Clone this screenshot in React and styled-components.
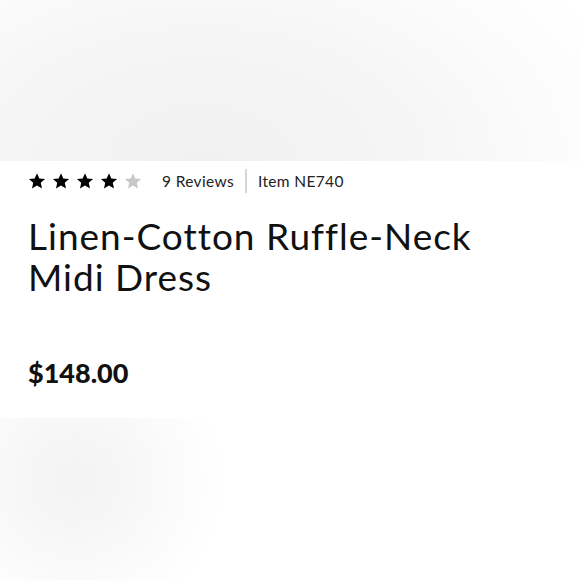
import styled, { createGlobalStyle } from "styled-components";

const GlobalStyle = createGlobalStyle`
  body {
    margin: 0;
    background: #fff;
    font-family: Lato, "Open Sans", sans-serif;
    color: #111;
  }
`;

const Page = styled.div`
  width: 580px;
  height: 580px;
  display: flex;
  flex-direction: column;
  overflow: hidden;
`;

const Hero = styled.div`
  height: 161px;
  flex-shrink: 0;
  background: radial-gradient(
    ellipse 78% 170% at 35% 100%,
    #f1f1f1 0%,
    #f5f5f5 45%,
    #fbfbfb 75%,
    #fff 100%
  );
`;

const Info = styled.div`
  padding: 8px 28px 0;
  height: 249px;
  flex-shrink: 0;
  display: flex;
  flex-direction: column;
`;

const Meta = styled.div`
  display: flex;
  align-items: center;
  height: 24px;
  font-size: 15.5px;
  letter-spacing: 0.35px;
  color: #222;
`;

const Stars = styled.div`
  display: flex;
  gap: 6px;
  margin-right: 20px;
`;

const Star = ({ on }) => (
  <svg width="18" height="18" viewBox="0 0 24 24">
    <path
      d="M12 1.5l3.1 7.1 7.7.7-5.8 5.1 1.7 7.6L12 18l-6.7 4 1.7-7.6-5.8-5.1 7.7-.7z"
      fill={on ? "#000" : "#c8c8c8"}
    />
  </svg>
);

const Divider = styled.span`
  width: 2px;
  height: 24px;
  background: #d6d6d6;
  margin: 0 11px 0 11px;
`;

const Title = styled.h1`
  margin: 22px 0 0;
  font-size: 37px;
  font-weight: 400;
  line-height: 41px;
  letter-spacing: 1px;
  color: #111;
`;

const Price = styled.div`
  margin-top: auto;
  margin-bottom: 29px;
  font-size: 27px;
  font-weight: 900;
  color: #111;
`;

const Swatch = styled.div`
  width: 232px;
  flex: 1;
  background: radial-gradient(
    circle at 75px 62px,
    #f3f3f3 0%,
    #f6f6f6 25%,
    #fbfbfb 55%,
    #fff 80%
  );
`;

export default function App() {
  return (
    <>
      <GlobalStyle />
      <Page>
        <Hero />
        <Info>
          <Meta>
            <Stars>
              {[1, 2, 3, 4, 5].map((n) => (
                <Star key={n} on={n <= 4} />
              ))}
            </Stars>
            <span>9 Reviews</span>
            <Divider />
            <span>Item NE740</span>
          </Meta>
          <Title>
            Linen-Cotton Ruffle-Neck
            <br />
            Midi Dress
          </Title>
          <Price>$148.00</Price>
        </Info>
        <Swatch />
      </Page>
    </>
  );
}
